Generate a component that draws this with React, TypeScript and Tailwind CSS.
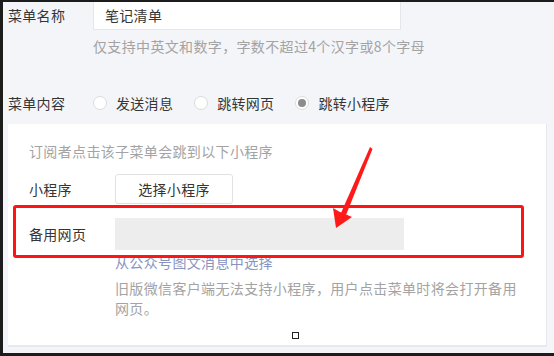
import React from "react";

const font = { fontFamily: '"Noto Sans CJK SC", "Noto Sans", sans-serif' };

function Radio({ checked, label }: { checked?: boolean; label: string }) {
  return (
    <div className="flex items-center">
      <span className="w-[14px] h-[14px] rounded-full bg-white border border-[#dcdcdc] flex items-center justify-center">
        {checked && <span className="w-[8px] h-[8px] rounded-full bg-[#8c8c8c]" />}
      </span>
      <span className="ml-[9px] text-[14px] text-[#353535] tracking-[0.3px]">{label}</span>
    </div>
  );
}

export default function App() {
  return (
    <div
      className="w-[554px] h-[356px] bg-[#1c1c1c] pt-[2px] pl-[3px] pb-[3px] overflow-hidden"
      style={font}
    >
      <div className="relative w-full h-full bg-[#f4f5f9] overflow-hidden">
        {/* Row 1 */}
        <div className="flex items-start">
          <div className="w-[90px] pl-[5px] pt-[3px] text-[14px] leading-[20px] text-[#353535] tracking-[0.3px]">
            菜单名称
          </div>
          <div className="w-[308px] h-[29px] -mt-[1px] bg-white border border-[#e6e7eb] border-t-0 pl-[11px] flex items-center text-[14px] text-[#353535] tracking-[0.3px]">
            笔记清单
          </div>
        </div>
        <div className="pl-[90px] mt-[6px] text-[14px] leading-[20px] text-[#a3a3a3] tracking-[0.35px]">
          仅支持中英文和数字，字数不超过4个汉字或8个字母
        </div>
        {/* Row 2 */}
        <div className="flex items-center mt-[37px] h-[20px]">
          <div className="w-[90px] pl-[5px] text-[14px] text-[#353535] tracking-[0.3px]">菜单内容</div>
          <div className="flex items-center gap-[21px]">
            <Radio label="发送消息" />
            <Radio label="跳转网页" />
            <Radio checked label="跳转小程序" />
          </div>
        </div>
        {/* Panel */}
        <div className="ml-[5px] mt-[11px] w-[539px] h-[223px] bg-white border-b-2 border-r border-[#e8e9ee] pl-[21px] pt-[17px]">
          <div className="text-[14px] leading-[20px] text-[#a3a3a3] tracking-[0.35px]">
            订阅者点击该子菜单会跳到以下小程序
          </div>
          <div className="flex items-center mt-[13px]">
            <div className="w-[86px] text-[14px] text-[#353535] tracking-[0.3px]">小程序</div>
            <div className="w-[118px] h-[30px] border border-[#e2e2e2] rounded-[3px] flex items-center justify-center text-[14px] text-[#353535] tracking-[0.3px]">
              选择小程序
            </div>
          </div>
          <div className="flex items-center mt-[14px]">
            <div className="w-[86px] text-[14px] text-[#353535] tracking-[0.3px]">备用网页</div>
            <div className="w-[289px] h-[32px] bg-[#ededed]" />
          </div>
          <div className="pl-[86px] mt-[2px] text-[14px] leading-[20px] text-[#8794bf] tracking-[0.35px]">
            从公众号图文消息中选择
          </div>
          <div className="pl-[86px] mt-[6px] pr-[20px] text-[14px] leading-[20px] text-[#a3a3a3] tracking-[0.35px]">
            旧版微信客户端无法支持小程序，用户点击菜单时将会打开备用网页。
          </div>
        </div>

        {/* Red highlight box */}
        <div className="absolute left-[10px] top-[203px] w-[511px] h-[53px] border-[3px] border-[#ff1414] rounded-[3px]" />

        {/* Small square handle */}
        <div className="absolute left-[289px] top-[330px] w-[7px] h-[7px] border border-[#222] bg-white" />

        {/* Red arrow */}
        <svg className="absolute left-0 top-0" width="551" height="351" viewBox="0 0 551 351">
          <g transform="translate(-3,-2)">
            <polygon points="370,147 372.5,149 346,215 341,213" fill="#ff1a1a" />
            <polygon points="336,228 333,208 339,211.5 345,214 352,217" fill="#ff1a1a" />
          </g>
        </svg>
      </div>
    </div>
  );
}
